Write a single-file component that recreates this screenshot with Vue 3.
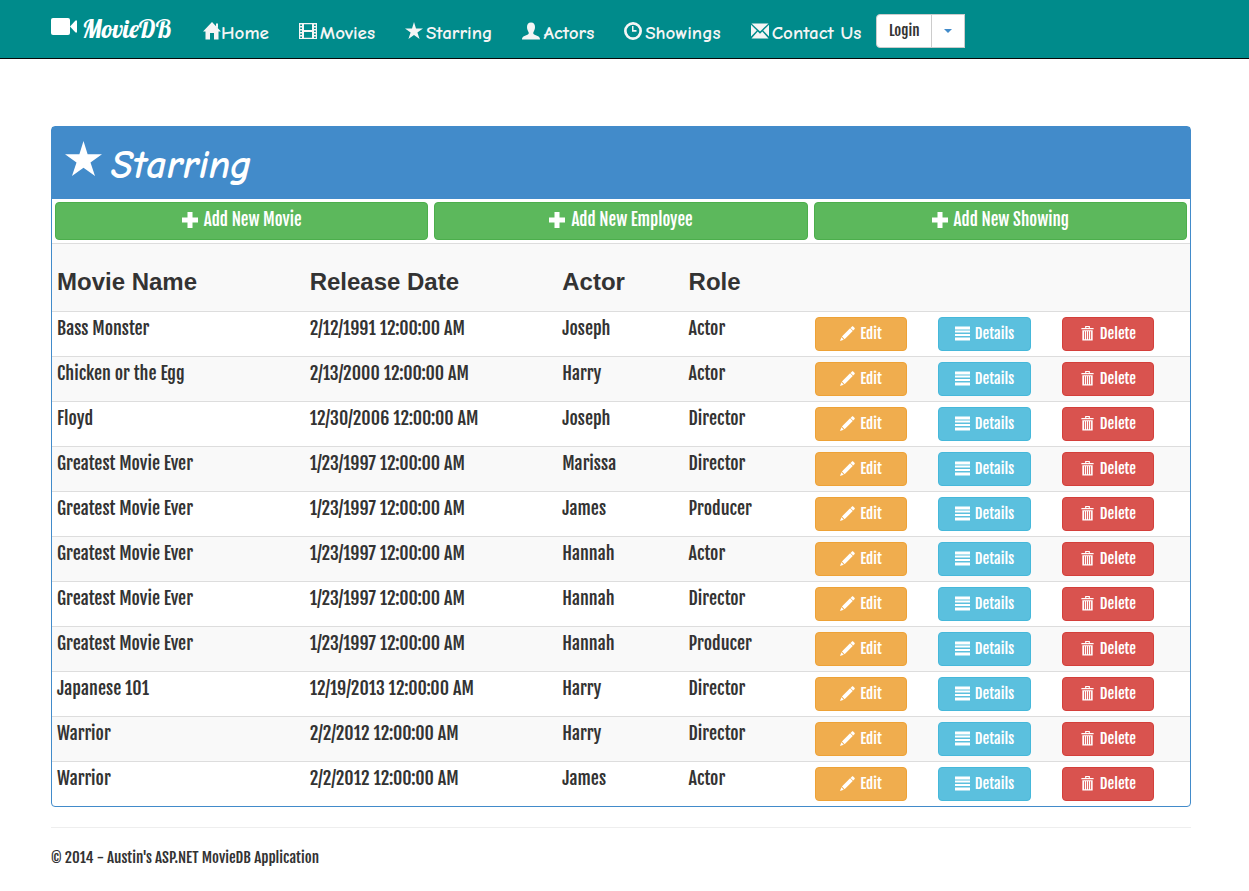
<script setup>
import { h } from 'vue'

const shapes = {
  video: { box: '0 0 26 18', d: ['M2 0h15a2 2 0 0 1 2 2v13a2 2 0 0 1-2 2H2a2 2 0 0 1-2-2V2a2 2 0 0 1 2-2z', 'M19 8.500L24.500 2.500H26v12h-1.500z'] },
  home: { box: '0 0 18 18', d: ['M9 0l9 9.500h-2.500V17.500H11V11H7v6.500H2.500V9.500H0z', 'M13 1.500h2v5l-2-2z'] },
  film: { box: '0 0 18 18', d: ['M0 1h18v16H0zM1.200 2.500v1.500h1.800V2.500zM1.200 5.500V7h1.800V5.500zM1.200 8.500V10h1.800V8.500zM1.200 11.500V13h1.800v-1.500zM1.200 14.500V16h1.800v-1.500zM15 2.500v1.500h1.800V2.500zM15 5.500V7h1.800V5.500zM15 8.500V10h1.800V8.500zM15 11.500V13h1.800v-1.500zM15 14.500V16h1.800v-1.500zM5 2.200V8h8V2.200zM5 10v5.800h8V10z'] },
  star: { box: '0 0 18 18', d: ['M9 0L11 6.500H18L12.400 10.400L14.600 17L9 13L3.400 17L5.600 10.400L0 6.500H7z'] },
  user: { box: '0 0 18 18', d: ['M9 0.500c2.800 0 4 2 4 4.500 0 2.600-1 4-1.600 5.200-.4 1-.1 1.800.7 2.200l4 1.900c1.100.6 1.900 1.400 1.900 3.200H0c0-1.800.8-2.600 1.900-3.200l4-1.900c.8-.4 1.100-1.200.7-2.200C6 9 5 7.600 5 5 5 2.500 6.200.5 9 .5z'] },
  clock: { box: '0 0 18 18', d: ['M9 0a9 9 0 1 1 0 18A9 9 0 0 1 9 0zM9 2.700a6.300 6.300 0 1 0 0 12.600A6.300 6.300 0 0 0 9 2.700z', 'M8 4h1.500v4H12.500v1.700H8z'] },
  mail: { box: '0 0 18 16', d: ['M0.500 0.500h17L9 8.500z', 'M0 1.800L5.800 7.500 0 13.500z', 'M18 1.800L12.200 7.500 18 13.500z', 'M6.700 8.500L9 10.700l2.300-2.200 6.200 7H0.500z'] },
  plus: { box: '0 0 16 16', d: ['M5.500 0h5v5.500H16v5h-5.500V16h-5v-5.500H0v-5h5.500z'] },
  pencil: { box: '0 0 14 14', d: ['M11 .6c.5-.5 1-.5 1.500 0l1 1c.5.500.5 1 0 1.500l-1.200 1.200L9.800 1.800z', 'M9.400 2.200l2.500 2.500L4.300 12.300 1.800 9.800z', 'M1.300 10.600l2.200 2.200L0 14z'] },
  lines: { box: '0 0 15 14', d: ['M0 0h15v3H0zM0 4h15v2H0zM0 7.500h15v2H0zM0 11h15v3H0z'] },
  trash: { box: '0 0 14 16', d: ['M4.500 0h5v2H13.500v1.500H.5V2h4zM5.700 1v1h2.600V1z', 'M1.500 4.500h11V15.500h-11zM3.300 5.500v8.500h.9V5.500zM5.500 5.500v8.500h.9V5.500zM7.700 5.500v8.500h.9V5.500zM9.900 5.500v8.500h.9V5.500z'] }
}

const Icon = (props) => h(
  'svg',
  { viewBox: shapes[props.name].box, fill: 'currentColor', 'fill-rule': 'evenodd', 'aria-hidden': 'true' },
  shapes[props.name].d.map((d) => h('path', { d }))
)
Icon.props = ['name']

const links = [
  { icon: 'home', label: 'Home', tight: true },
  { icon: 'film', label: 'Movies' },
  { icon: 'star', label: 'Starring' },
  { icon: 'user', label: 'Actors' },
  { icon: 'clock', label: 'Showings' },
  { icon: 'mail', label: 'Contact Us' }
]

const additions = ['Add New Movie', 'Add New Employee', 'Add New Showing']

const rows = [
  ['Bass Monster', '2/12/1991 12:00:00 AM', 'Joseph', 'Actor'],
  ['Chicken or the Egg', '2/13/2000 12:00:00 AM', 'Harry', 'Actor'],
  ['Floyd', '12/30/2006 12:00:00 AM', 'Joseph', 'Director'],
  ['Greatest Movie Ever', '1/23/1997 12:00:00 AM', 'Marissa', 'Director'],
  ['Greatest Movie Ever', '1/23/1997 12:00:00 AM', 'James', 'Producer'],
  ['Greatest Movie Ever', '1/23/1997 12:00:00 AM', 'Hannah', 'Actor'],
  ['Greatest Movie Ever', '1/23/1997 12:00:00 AM', 'Hannah', 'Director'],
  ['Greatest Movie Ever', '1/23/1997 12:00:00 AM', 'Hannah', 'Producer'],
  ['Japanese 101', '12/19/2013 12:00:00 AM', 'Harry', 'Director'],
  ['Warrior', '2/2/2012 12:00:00 AM', 'Harry', 'Director'],
  ['Warrior', '2/2/2012 12:00:00 AM', 'James', 'Actor']
]
</script>

<template>
  <header class="navbar">
    <nav class="container nav">
      <a class="brand" href="#"><Icon name="video" class="brand-icon" /><span>MovieDB</span></a>
      <ul class="links">
        <li v-for="link in links" :key="link.label">
          <a href="#" :class="{ tight: link.tight }"><Icon :name="link.icon" class="nav-icon" /><span>{{ link.label }}</span></a>
        </li>
      </ul>
      <div class="login">
        <button type="button" class="login-main">Login</button>
        <button type="button" class="login-toggle" aria-label="Login options"><span class="caret"></span></button>
      </div>
    </nav>
  </header>

  <main class="container">
    <section class="panel">
      <h1 class="panel-heading"><Icon name="star" class="heading-icon" /><em>Starring</em></h1>
      <div class="additions">
        <button v-for="label in additions" :key="label" type="button" class="btn add">
          <Icon name="plus" class="add-icon" />{{ label }}
        </button>
      </div>
      <table>
        <thead>
          <tr>
            <th class="wide" scope="col">Movie Name</th>
            <th class="wide" scope="col">Release Date</th>
            <th class="narrow" scope="col">Actor</th>
            <th class="narrow" scope="col">Role</th>
            <td></td>
          </tr>
        </thead>
        <tbody>
          <tr v-for="(row, i) in rows" :key="i">
            <td v-for="(cell, j) in row" :key="j">{{ cell }}</td>
            <td>
              <div class="actions">
                <button type="button" class="btn edit"><Icon name="pencil" class="btn-icon" />Edit</button>
                <button type="button" class="btn details"><Icon name="lines" class="btn-icon" />Details</button>
                <button type="button" class="btn delete"><Icon name="trash" class="btn-icon" />Delete</button>
              </div>
            </td>
          </tr>
        </tbody>
      </table>
    </section>
    <footer>© 2014 - Austin's ASP.NET MovieDB Application</footer>
  </main>
</template>

<style>
body {
  margin: 0;
  background: #fff;
}
</style>

<style scoped>
* {
  box-sizing: border-box;
}

.container {
  max-width: 1140px;
  margin: 0 58px 0 51px;
  font-family: "Fjalla One", "Liberation Sans Narrow", "Arial Narrow", "Liberation Sans", sans-serif;
  color: #333;
}

.navbar {
  background: #008b8b;
  border-bottom: 1px solid #080808;
  margin-bottom: 67px;
}

.nav {
  display: flex;
  height: 58px;
}

.brand {
  display: flex;
  gap: 5px;
  width: 121px;
  margin-right: 31px;
  padding-top: 18px;
  color: #fff;
  font: 25px/22px Lobster, "Liberation Serif", serif;
  text-decoration: none;
}

.brand-icon {
  flex: none;
  width: 26px;
  height: 18px;
}

.links {
  display: flex;
  gap: 30px;
  margin: 0 15px 0 0;
  padding: 0;
  list-style: none;
}

.links a {
  display: flex;
  gap: 3px;
  padding-top: 22px;
  color: #f5f5f5;
  font: bold 19px/22px "Comic Sans MS", "Comic Neue", Lato, sans-serif;
  text-decoration: none;
  white-space: nowrap;
}

.links a.tight {
  gap: 0;
}

.nav-icon {
  width: 18px;
  height: 18px;
}

.login {
  display: flex;
  height: 34px;
  margin-top: 14px;
}

.login button {
  border: 1px solid #ccc;
  background: #fff;
  color: #333;
  font-family: inherit;
  font-size: 15px;
  line-height: 20px;
}

.login .login-main {
  width: 56px;
  padding: 0;
  border-radius: 4px 0 0 4px;
}

.login .login-toggle {
  display: flex;
  align-items: center;
  justify-content: center;
  width: 34px;
  margin-left: -1px;
  padding: 0;
}

.caret {
  border: 4px solid transparent;
  border-top-color: #428bca;
  border-bottom: 0;
}

.panel {
  border: 1px solid #428bca;
  border-radius: 4px;
}

.panel-heading {
  display: flex;
  gap: 9px;
  height: 72px;
  margin: 0;
  padding: 14px 13px 0;
  background: #428bca;
  color: #fff;
  font: bold 40px/48px "Comic Sans MS", "Comic Neue", Lato, sans-serif;
}

.heading-icon {
  width: 37px;
  height: 37px;
}

.additions {
  display: grid;
  grid-template-columns: repeat(3, 1fr);
  gap: 6px;
  padding: 3px;
}

.btn {
  display: flex;
  align-items: center;
  justify-content: center;
  gap: 5px;
  height: 34px;
  padding: 0 0 1px;
  border: 1px solid;
  border-radius: 4px;
  color: #fff;
  font-family: inherit;
  font-size: 15px;
  line-height: 20px;
}

.add {
  gap: 6px;
  height: 38px;
  padding-bottom: 2px;
  background: #5cb85c;
  border-color: #4cae4c;
  font-size: 17px;
}

.add-icon {
  width: 16px;
  height: 16px;
}

.btn-icon {
  width: 15px;
  height: 15px;
}

.edit {
  background: #f0ad4e;
  border-color: #eea236;
}

.details {
  background: #5bc0de;
  border-color: #46b8da;
}

.delete {
  background: #d9534f;
  border-color: #d43f3a;
}

table {
  width: 100%;
  table-layout: fixed;
  border-collapse: separate;
  border-spacing: 0;
}

th,
td {
  height: 45px;
  padding: 5px;
  border-top: 1px solid #ddd;
  text-align: left;
  vertical-align: top;
  font-size: 18px;
  line-height: 22px;
}

th {
  height: 68px;
  padding-top: 24px;
  font: bold 24px/28px "Liberation Sans", Arial, sans-serif;
}

.wide {
  width: 22.2%;
}

.narrow {
  width: 11.1%;
}

thead tr,
tbody tr:nth-child(even) {
  background: #f9f9f9;
}

tbody tr:last-child td:first-child {
  border-bottom-left-radius: 4px;
}

.actions {
  display: grid;
  grid-template-columns: repeat(3, 1fr);
  gap: 31px;
  padding-right: 31px;
}

footer {
  margin-top: 20px;
  padding: 20px 0;
  border-top: 1px solid #eee;
  font-size: 15px;
  line-height: 20px;
}
</style>
